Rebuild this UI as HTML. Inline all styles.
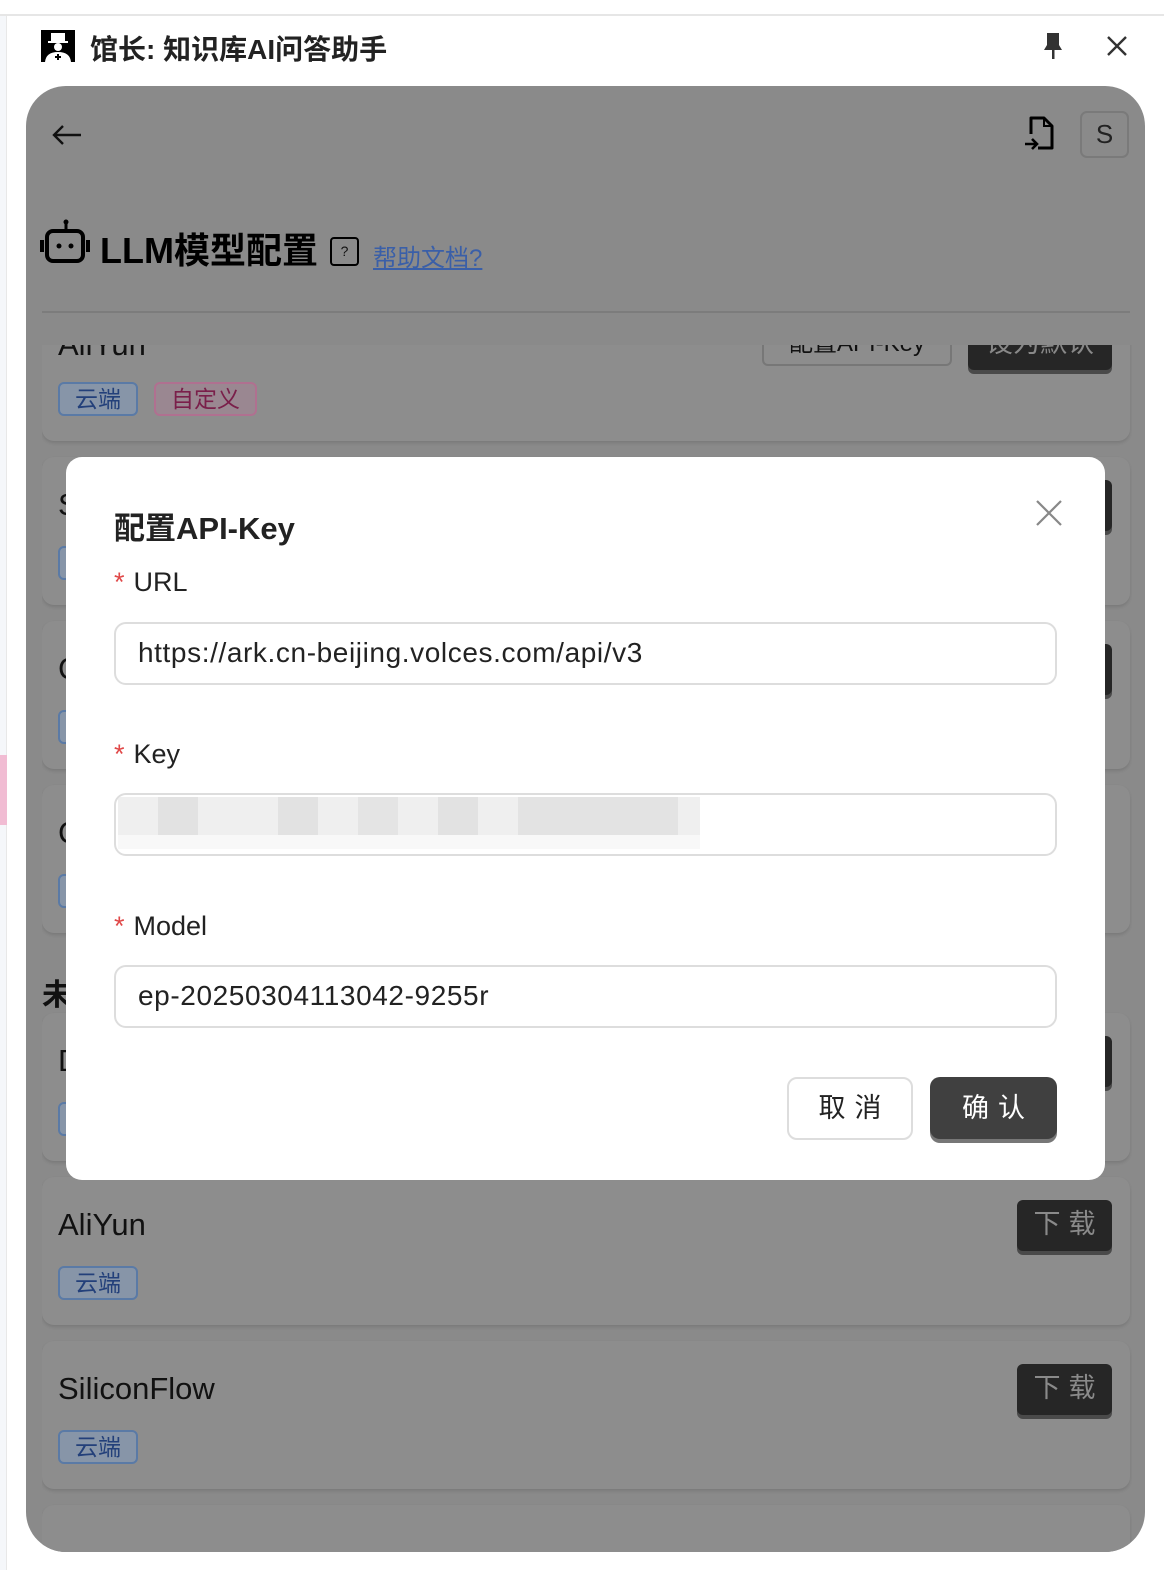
<!DOCTYPE html>
<html><head><meta charset="utf-8"><style>
*{box-sizing:border-box;margin:0;padding:0}
html,body{width:1164px;height:1570px;overflow:hidden}
body{background:#fff;position:relative;font-family:"Liberation Sans","Noto Sans CJK SC",sans-serif;color:#111}
.abs{position:absolute}
.panel{left:26px;top:86px;width:1119px;height:1466px;background:#8a8a8a;border-radius:40px;overflow:hidden}
.scroll{left:16px;top:259px;width:1090px;height:1207px;overflow:hidden}
.card{position:absolute;left:0;width:1088px;height:148px;background:#8d8d8d;border-radius:12px;box-shadow:0 2px 3px rgba(0,0,0,.12)}
.card .t{position:absolute;left:16px;top:30px;font-size:31px;color:#111}
.tag{position:absolute;top:89px;height:34px;border:2px solid #5a7aa6;border-radius:6px;color:#23407a;font-size:23px;line-height:30px;padding:0 15px;background:#8795a8}
.dl{position:absolute;right:18px;top:23px;width:95px;height:51px;background:#262626;border-radius:6px;color:#8a8a8a;font-size:27px;line-height:49px;text-align:center;box-shadow:0 4px 0 #4a4a4a;letter-spacing:8px;text-indent:8px}
.modal{left:66px;top:457px;width:1039px;height:723px;background:#fff;border-radius:16px}
.lbl{position:absolute;left:48px;font-size:27px;color:#222}
.lbl b{color:#e04848;font-weight:normal;margin-right:9px}
.inp{position:absolute;left:48px;width:943px;height:63px;border:2px solid #ddd;border-radius:12px;font-size:28px;letter-spacing:0.6px;padding-left:22px;line-height:58px;color:#222}
</style></head><body>
<div class="abs" style="left:0;top:14px;width:1164px;height:2px;background:#e6e6e6"></div>
<div class="abs" style="left:0;top:16px;width:7px;height:1554px;border-right:1px solid #e8e8e8;background:#f5f7fa"></div>
<div class="abs" style="left:0;top:755px;width:7px;height:70px;background:#f1bcd3"></div>
<svg class="abs" style="left:41px;top:30px" width="34" height="32" viewBox="0 0 34 32"><rect width="34" height="32" fill="#000"/><rect x="10" y="3" width="14" height="9" fill="#fff"/><rect x="7" y="11" width="20" height="2" fill="#fff"/><circle cx="17" cy="17" r="4" fill="#fff"/><path d="M4 32 Q5 22 17 22 Q29 22 30 32Z" fill="#fff"/><path d="M17 24v6M14 27h6" stroke="#000" stroke-width="2"/></svg>
<div class="abs" style="left:90px;top:28px;font-size:28px;font-weight:bold;color:#222">馆长: 知识库AI问答助手</div>
<svg class="abs" style="left:1041px;top:31px" width="24" height="30" viewBox="0 0 24 30"><path d="M6 2h12v12l3 5H3l3-5z" fill="#333"/><rect x="11" y="18" width="2.5" height="10" fill="#333"/></svg>
<svg class="abs" style="left:1106px;top:35px" width="22" height="22" viewBox="0 0 22 22"><path d="M2 2L20 20M20 2L2 20" stroke="#333" stroke-width="2.4"/></svg>
<div class="abs panel">
<div class="abs scroll">
 <div class="card" style="top:-52px"><div class="t" style="top:34px">AliYun</div>
  <div class="abs" style="left:720px;top:30px;width:190px;height:43px;border:2px solid #777;border-radius:6px;background:#8d8d8d;font-size:24px;text-align:center;line-height:38px">配置API-Key</div>
  <div class="dl" style="top:26px;width:144px;right:18px;color:#888;letter-spacing:0;text-indent:0">设为默认</div>
  <div class="tag" style="left:16px">云端</div><div class="tag" style="left:112px;border-color:#b07090;color:#7a1f4a;background:#9a8791">自定义</div></div>
 <div class="card" style="top:112px"><div class="t">S</div><div class="dl"></div><div class="tag" style="left:16px">云端</div></div>
 <div class="card" style="top:276px"><div class="t">C</div><div class="dl"></div><div class="tag" style="left:16px">云端</div></div>
 <div class="card" style="top:440px"><div class="t">C</div><div class="tag" style="left:16px">云端</div></div>
 <div class="abs" style="left:0;top:625px;font-size:30px;font-weight:bold">未</div>
 <div class="card" style="top:668px"><div class="t">D</div><div class="dl"></div><div class="tag" style="left:16px">云端</div></div>
 <div class="card" style="top:832px"><div class="t">AliYun</div><div class="dl">下载</div><div class="tag" style="left:16px">云端</div></div>
 <div class="card" style="top:996px"><div class="t">SiliconFlow</div><div class="dl">下载</div><div class="tag" style="left:16px">云端</div></div>
 <div class="card" style="top:1160px"></div>
</div>
</div>
<svg class="abs" style="left:51px;top:123px" width="32" height="24" viewBox="0 0 32 24"><path d="M30 12H3M12 3L3 12l9 9" stroke="#111" stroke-width="2.4" fill="none"/></svg>
<svg class="abs" style="left:1024px;top:114px" width="36" height="40" viewBox="0 0 36 40"><path d="M7 20V4h13l8 8v22H14" stroke="#000" stroke-width="3" fill="none" stroke-linejoin="round"/><path d="M20 4v8h8" stroke="#000" stroke-width="2" fill="none"/><path d="M1 30h12M8 25l5 5-5 5" stroke="#000" stroke-width="2.6" fill="none"/></svg>
<div class="abs" style="left:1080px;top:111px;width:49px;height:47px;border:2px solid #7a7a7a;border-radius:7px;font-size:26px;text-align:center;line-height:43px;color:#222">S</div>
<svg class="abs" style="left:40px;top:218px" width="52" height="46" viewBox="0 0 52 46"><circle cx="26" cy="4" r="2.5" fill="#000"/><path d="M26 6v7" stroke="#000" stroke-width="3"/><rect x="7" y="13" width="36" height="30" rx="6" stroke="#000" stroke-width="4" fill="none"/><circle cx="19" cy="28" r="2.5" fill="#000"/><circle cx="31" cy="28" r="2.5" fill="#000"/><path d="M2 22v12M48 22v12" stroke="#000" stroke-width="4"/></svg>
<div class="abs" style="left:100px;top:222px;font-size:36px;font-weight:bold;color:#000">LLM模型配置</div>
<div class="abs" style="left:330px;top:237px;width:29px;height:29px;border:2px solid #000;border-radius:4px;font-size:14px;text-align:center;line-height:25px">?</div>
<div class="abs" style="left:373px;top:238px;font-size:24px;color:#3a5fa8;text-decoration:underline">帮助文档?</div>
<div class="abs" style="left:42px;top:311px;width:1088px;height:2px;background:#7c7c7c"></div>
<div class="abs modal">
 <div class="abs" style="left:48px;top:46px;font-size:31px;font-weight:bold;color:#222">配置API-Key</div>
 <svg class="abs" style="left:970px;top:43px" width="26" height="26" viewBox="0 0 26 26"><path d="M1 1L25 25M25 1L1 25" stroke="#888" stroke-width="2.2"/></svg>
 <div class="lbl" style="top:110px"><b>*</b>URL</div>
 <div class="inp" style="top:165px">https://ark.cn-beijing.volces.com/api/v3</div>
 <div class="lbl" style="top:282px"><b>*</b>Key</div>
 <div class="inp" style="top:336px;padding:0;overflow:hidden">
  <div class="abs" style="left:2px;top:2px;width:582px;height:38px;background:#efefef"></div>
  <div class="abs" style="left:42px;top:2px;width:40px;height:38px;background:#e2e2e2"></div>
  <div class="abs" style="left:162px;top:2px;width:40px;height:38px;background:#e2e2e2"></div>
  <div class="abs" style="left:242px;top:2px;width:40px;height:38px;background:#e4e4e4"></div>
  <div class="abs" style="left:322px;top:2px;width:40px;height:38px;background:#e2e2e2"></div>
  <div class="abs" style="left:402px;top:2px;width:160px;height:38px;background:#e3e3e3"></div>
  <div class="abs" style="left:2px;top:40px;width:582px;height:14px;background:#f8f8f8"></div>
 </div>
 <div class="lbl" style="top:454px"><b>*</b>Model</div>
 <div class="inp" style="top:508px">ep-20250304113042-9255r</div>
 <div class="abs" style="left:721px;top:620px;width:126px;height:63px;border:2px solid #ddd;border-radius:10px;font-size:27px;text-align:center;line-height:59px;letter-spacing:9px;text-indent:9px;color:#222">取消</div>
 <div class="abs" style="left:864px;top:620px;width:127px;height:62px;background:#404040;border-radius:10px;font-size:27px;text-align:center;line-height:62px;letter-spacing:9px;text-indent:9px;color:#fff;box-shadow:0 4px 0 #777">确认</div>
</div>
</body></html>
